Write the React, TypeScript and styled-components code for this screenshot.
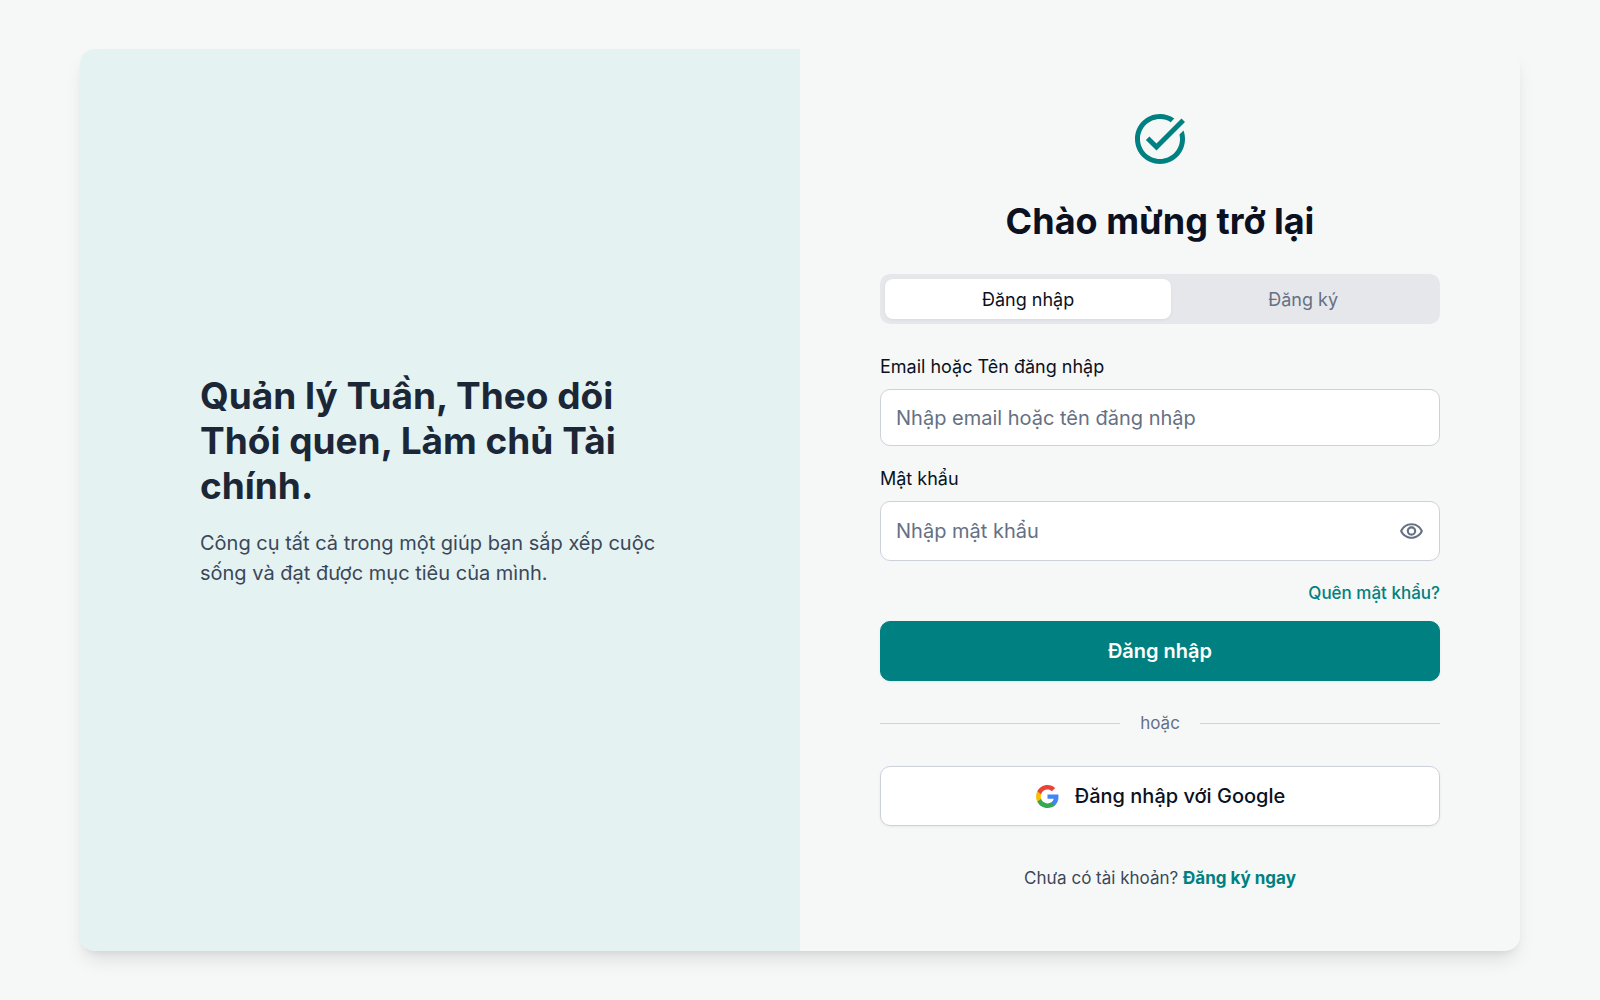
import React, { useState } from "react";
import styled, { createGlobalStyle } from "styled-components";
import { MdOutlineVisibility, MdTaskAlt } from "react-icons/md";

const color = {
  page: "#f6f8f8",
  tint: "#e4f2f2",
  primary: "#008080",
  ink: "#0b1120",
  heading: "#1b2636",
  body: "#3b4759",
  muted: "#667083",
  border: "#cdd2da",
  track: "#e5e7eb",
};

const GlobalStyle = createGlobalStyle`
  *, *::before, *::after { box-sizing: border-box; }
  body {
    margin: 0;
    background: ${color.page};
    color: ${color.ink};
    font-family: Inter, "Noto Sans", sans-serif;
    font-size: 20px;
    line-height: 30px;
  }
  button, input { font: inherit; color: inherit; }
  button { cursor: pointer; }
  h1, h2, p { margin: 0; }
`;

const Page = styled.div`
  min-height: 100vh;
  display: flex;
  align-items: center;
  justify-content: center;
  padding: 40px 80px;
`;

const Card = styled.main`
  width: 100%;
  max-width: 1440px;
  display: grid;
  grid-template-columns: 1fr 1fr;
  border-radius: 15px;
  overflow: hidden;
  background: ${color.page};
  box-shadow: 0 12px 19px -4px rgba(0, 0, 0, 0.1), 0 5px 8px -5px rgba(0, 0, 0, 0.1);
`;

const Intro = styled.section`
  display: flex;
  align-items: center;
  justify-content: center;
  padding: 60px;
  background: ${color.tint};
`;

const IntroText = styled.div`
  width: 100%;
  max-width: 480px;
  margin-bottom: 40px;
`;

const Slogan = styled.h2`
  margin-bottom: 20px;
  color: ${color.heading};
  font-size: 37px;
  line-height: 45px;
  font-weight: 700;
`;

const Summary = styled.p`
  color: ${color.body};
`;

const Panel = styled.section`
  display: flex;
  flex-direction: column;
  padding: 60px 80px;
`;

const Brand = styled.div`
  display: flex;
  justify-content: center;
  margin-bottom: 30px;
  color: ${color.primary};
`;

const Title = styled.h1`
  margin-bottom: 30px;
  font-size: 36px;
  line-height: 45px;
  font-weight: 700;
  text-align: center;
`;

const Tabs = styled.div`
  display: flex;
  height: 50px;
  padding: 5px;
  margin-bottom: 30px;
  border-radius: 10px;
  background: ${color.track};
`;

const Tab = styled.button<{ $active: boolean }>`
  flex: 1 1 auto;
  border: 0;
  border-radius: 8px;
  padding: 0 10px;
  font-size: 18px;
  line-height: 25px;
  color: ${(p) => (p.$active ? color.ink : color.muted)};
  background: ${(p) => (p.$active ? "#fff" : "transparent")};
  box-shadow: ${(p) => (p.$active ? "0 1px 3px rgba(0, 0, 0, 0.06)" : "none")};
`;

const Form = styled.form`
  display: flex;
  flex-direction: column;
`;

const Field = styled.div`
  display: flex;
  flex-direction: column;
  gap: 10px;
  margin-bottom: 20px;
`;

const Label = styled.label`
  font-size: 18px;
  line-height: 25px;
`;

const InputBox = styled.div<{ $height: number }>`
  display: flex;
  height: ${(p) => p.$height}px;
  border: 1px solid ${color.border};
  border-radius: 10px;
  background: #fff;
  &:focus-within { border-color: ${color.primary}; }
`;

const Input = styled.input`
  flex: 1;
  min-width: 0;
  padding: 0 15px;
  border: 0;
  border-radius: 10px;
  outline: 0;
  background: transparent;
  &::placeholder { color: ${color.muted}; opacity: 1; }
`;

const RevealButton = styled.button`
  display: flex;
  align-items: center;
  padding: 0 15px;
  border: 0;
  background: transparent;
  color: ${color.muted};
`;

const Link = styled.a<{ $strong?: boolean }>`
  color: ${color.primary};
  font-weight: ${(p) => (p.$strong ? 700 : 500)};
  text-decoration: none;
`;

const Forgot = styled.p`
  margin-bottom: 15px;
  font-size: 17px;
  line-height: 25px;
  text-align: right;
`;

const Button = styled.button<{ $primary?: boolean }>`
  display: flex;
  align-items: center;
  justify-content: center;
  gap: 15px;
  height: 60px;
  border: 1px solid ${(p) => (p.$primary ? color.primary : color.border)};
  border-radius: 10px;
  background: ${(p) => (p.$primary ? color.primary : "#fff")};
  color: ${(p) => (p.$primary ? "#fff" : color.ink)};
  font-weight: ${(p) => (p.$primary ? 600 : 500)};
  box-shadow: 0 1px 3px rgba(0, 0, 0, 0.06);
`;

const Divider = styled.div`
  display: flex;
  align-items: center;
  gap: 20px;
  margin: 30px 0;
  font-size: 17px;
  line-height: 25px;
  color: ${color.muted};
  &::before, &::after {
    content: "";
    flex: 1;
    height: 1px;
    background: ${color.border};
  }
`;

const SignUp = styled.p`
  margin-top: 40px;
  font-size: 17px;
  line-height: 25px;
  text-align: center;
  color: ${color.body};
`;

const GoogleLogo = () => (
  <svg width="25" height="25" viewBox="0 0 24 24" aria-hidden="true">
    <path fill="#4285F4" d="M22.56 12.25c0-.78-.07-1.53-.2-2.25H12v4.26h5.92c-.26 1.37-1.04 2.53-2.21 3.31v2.77h3.57c2.08-1.92 3.28-4.74 3.28-8.09z" />
    <path fill="#34A853" d="M12 23c2.97 0 5.46-.98 7.28-2.66l-3.57-2.77c-.98.66-2.23 1.06-3.71 1.06-2.86 0-5.29-1.93-6.16-4.53H2.18v2.84C3.99 20.53 7.7 23 12 23z" />
    <path fill="#FBBC05" d="M5.84 14.09c-.22-.66-.35-1.36-.35-2.09s.13-1.43.35-2.09V7.07H2.18C1.43 8.55 1 10.22 1 12s.43 3.45 1.18 4.93l3.66-2.84z" />
    <path fill="#EA4335" d="M12 5.38c1.62 0 3.06.56 4.21 1.64l3.15-3.15C17.45 2.09 14.97 1 12 1 7.7 1 3.99 3.47 2.18 7.07l3.66 2.84c.87-2.6 3.3-4.53 6.16-4.53z" />
  </svg>
);

export default function App() {
  const [tab, setTab] = useState("login");
  const [visible, setVisible] = useState(false);
  return (
    <>
      <GlobalStyle />
      <Page>
        <Card>
          <Intro>
            <IntroText>
              <Slogan>Quản lý Tuần, Theo dõi Thói quen, Làm chủ Tài chính.</Slogan>
              <Summary>Công cụ tất cả trong một giúp bạn sắp xếp cuộc sống và đạt được mục tiêu của mình.</Summary>
            </IntroText>
          </Intro>
          <Panel>
            <Brand><MdTaskAlt size={60} /></Brand>
            <Title>Chào mừng trở lại</Title>
            <Tabs role="tablist">
              <Tab type="button" role="tab" aria-selected={tab === "login"} $active={tab === "login"} onClick={() => setTab("login")}>Đăng nhập</Tab>
              <Tab type="button" role="tab" aria-selected={tab === "signup"} $active={tab === "signup"} onClick={() => setTab("signup")}>Đăng ký</Tab>
            </Tabs>
            <Form onSubmit={(e) => e.preventDefault()}>
              <Field>
                <Label htmlFor="account">Email hoặc Tên đăng nhập</Label>
                <InputBox $height={57}>
                  <Input id="account" type="text" placeholder="Nhập email hoặc tên đăng nhập" />
                </InputBox>
              </Field>
              <Field>
                <Label htmlFor="password">Mật khẩu</Label>
                <InputBox $height={60}>
                  <Input id="password" type={visible ? "text" : "password"} placeholder="Nhập mật khẩu" />
                  <RevealButton type="button" aria-label="Hiện mật khẩu" onClick={() => setVisible(!visible)}>
                    <MdOutlineVisibility size={25} />
                  </RevealButton>
                </InputBox>
              </Field>
              <Forgot><Link href="#">Quên mật khẩu?</Link></Forgot>
              <Button type="submit" $primary>Đăng nhập</Button>
              <Divider>hoặc</Divider>
              <Button type="button"><GoogleLogo />Đăng nhập với Google</Button>
            </Form>
            <SignUp>Chưa có tài khoản? <Link href="#" $strong>Đăng ký ngay</Link></SignUp>
          </Panel>
        </Card>
      </Page>
    </>
  );
}
